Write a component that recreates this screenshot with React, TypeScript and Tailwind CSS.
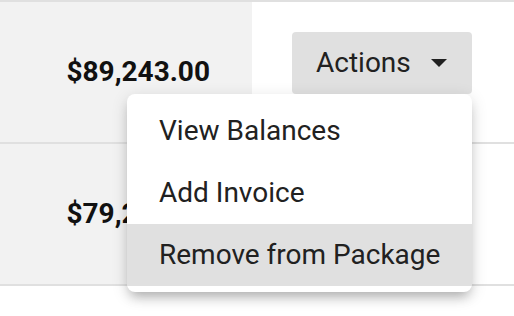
import React from 'react';

const rows = [
  { id: 1, amount: '$89,243.00', hasMenu: true },
  { id: 2, amount: '$79,243.00', hasMenu: false },
];

const menuItems = ['View Balances', 'Add Invoice', 'Remove from Package'];

const CaretDown: React.FC = () => (
  <svg width="16" height="8" viewBox="0 0 16 8" className="shrink-0">
    <path d="M0 0h16L8 8z" fill="#212121" />
  </svg>
);

const ActionsMenu: React.FC = () => (
  <div className="absolute right-0 top-[62px] z-10 w-[345px] rounded-[8px] bg-white py-[6px] shadow-[0_8px_12px_-4px_rgba(0,0,0,0.25),0_4px_16px_1px_rgba(0,0,0,0.12)]">
    {menuItems.map((item, i) => (
      <div
        key={item}
        className={`flex h-[62px] items-center pl-[32px] text-[28px] leading-none text-[#212121] ${
          i === menuItems.length - 1 ? 'bg-[#e0e0e0]' : ''
        }`}
      >
        {item}
      </div>
    ))}
  </div>
);

const App: React.FC = () => {
  return (
    <div className="h-[316px] w-[514px] overflow-hidden bg-white font-['Roboto',sans-serif]">
      <div className="border-t-2 border-[#e0e0e0]">
        {rows.map((row) => (
          <div key={row.id} className="flex h-[142px] border-b-2 border-[#e0e0e0]">
            {/* Amount cell */}
            <div className="flex w-[252px] items-center justify-end bg-[#f2f2f2] pr-[42px]">
              <span className="text-[28px] font-bold leading-none text-[#111]">{row.amount}</span>
            </div>

            {/* Actions cell */}
            <div className="flex-1 pl-[40px] pt-[30px]">
              {row.hasMenu && (
                <div className="relative w-[180px]">
                  <button className="flex h-[62px] w-[180px] items-center justify-between rounded-[4px] bg-[#e0e0e0] pl-[24px] pr-[25px] text-[28px] leading-none text-[#212121]">
                    <span>Actions</span>
                    <CaretDown />
                  </button>
                  <ActionsMenu />
                </div>
              )}
            </div>
          </div>
        ))}
      </div>
    </div>
  );
};

export default App;
